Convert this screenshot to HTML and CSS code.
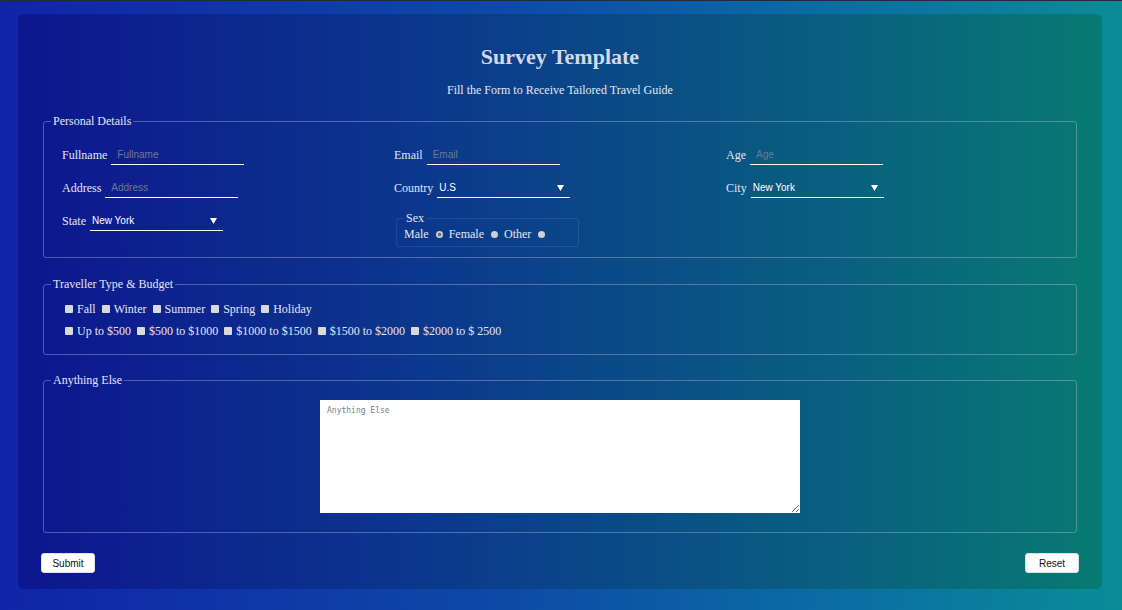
FILE: index.html
```html
<!DOCTYPE html>
<html lang="en">
<head>
<meta charset="utf-8">
<title>Survey Template</title>
<link rel="stylesheet" href="styles.css">
</head>
<body>
<div class="card">
  <h1 class="title">Survey Template</h1>
  <p class="subtitle">Fill the Form to Receive Tailored Travel Guide</p>
  <form class="form">
    <fieldset class="group personal">
      <legend>Personal Details</legend>
      <div class="grid">
        <div class="field"><label>Fullname</label><input class="text" placeholder="Fullname"></div>
        <div class="field"><label>Email</label><input class="text" placeholder="Email"></div>
        <div class="field"><label>Age</label><input class="text" placeholder="Age"></div>
        <div class="field"><label>Address</label><input class="text" placeholder="Address"></div>
        <div class="field"><label>Country</label>
          <span class="select"><select><option>U.S</option></select><svg class="arrow" width="7" height="6" viewBox="0 0 7 6"><path d="M0 0H7L3.5 6Z" fill="#fff"/></svg></span>
        </div>
        <div class="field"><label>City</label>
          <span class="select"><select><option>New York</option></select><svg class="arrow" width="7" height="6" viewBox="0 0 7 6"><path d="M0 0H7L3.5 6Z" fill="#fff"/></svg></span>
        </div>
        <div class="field"><label>State</label>
          <span class="select"><select><option>New York</option></select><svg class="arrow" width="7" height="6" viewBox="0 0 7 6"><path d="M0 0H7L3.5 6Z" fill="#fff"/></svg></span>
        </div>
        <fieldset class="sex">
          <legend>Sex</legend>
          <div class="radios">
            <label>Male</label><input type="radio" name="sex" checked>
            <label>Female</label><input type="radio" name="sex">
            <label>Other</label><input type="radio" name="sex">
          </div>
        </fieldset>
      </div>
    </fieldset>

    <fieldset class="group traveller">
      <legend>Traveller Type &amp; Budget</legend>
      <div class="checks">
        <input type="checkbox"><label>Fall</label>
        <input type="checkbox"><label>Winter</label>
        <input type="checkbox"><label>Summer</label>
        <input type="checkbox"><label>Spring</label>
        <input type="checkbox"><label>Holiday</label>
      </div>
      <div class="checks">
        <input type="checkbox"><label>Up to $500</label>
        <input type="checkbox"><label>$500 to $1000</label>
        <input type="checkbox"><label>$1000 to $1500</label>
        <input type="checkbox"><label>$1500 to $2000</label>
        <input type="checkbox"><label>$2000 to $ 2500</label>
      </div>
    </fieldset>

    <fieldset class="group else">
      <legend>Anything Else</legend>
      <textarea class="notes" placeholder="Anything Else"></textarea>
    </fieldset>

    <div class="actions">
      <button type="submit" class="btn">Submit</button>
      <button type="reset" class="btn">Reset</button>
    </div>
  </form>
</div>
</body>
</html>
```
FILE: styles.css
```css
html, body {
  margin: 0;
  height: 610px;
  overflow: hidden;
}
body {
  box-sizing: border-box;
  border-top: 1px solid #262a36;
  padding: 13px 20px 0 18px;
  background: linear-gradient(to right, #1024a8 0%, #0d4aa6 45%, #0b6ea4 75%, #0a8c97 100%);
  font-family: "Liberation Serif", "Times New Roman", serif;
  color: #e4e5f0;
}
.card {
  border-radius: 6px;
  padding: 30px 23px 16px;
  background: linear-gradient(to right, #0d168f 0%, #0b3a8c 40%, #095f80 75%, #087a72 100%);
}
.title {
  margin: 0;
  font-size: 22px;
  line-height: 26px;
  font-weight: bold;
  text-align: center;
  color: #d6d8e6;
}
.subtitle {
  margin: 13px 0 0;
  font-size: 12px;
  line-height: 14px;
  text-align: center;
  color: #e6e8f2;
}
.form {
  margin: 0;
}
.group {
  margin: 17px 2px 0;
  padding: 17px 7px 10px;
  border: 1px solid rgba(190, 196, 230, 0.38);
  border-radius: 3px;
  min-width: 0;
}
.group legend, .sex legend {
  font-size: 12px;
  line-height: 14px;
  padding: 0 2px;
  color: #e4e5f0;
}
.grid {
  display: grid;
  grid-template-columns: 332px 332px 332px;
  row-gap: 13px;
  padding-left: 11px;
  align-items: start;
}
.field {
  display: flex;
  align-items: center;
  height: 20px;
}
.field label {
  font-size: 12px;
  line-height: 20px;
  margin-right: 4px;
  white-space: nowrap;
}
.text {
  box-sizing: border-box;
  width: 133px;
  height: 20px;
  padding: 0 6px 1px 6px;
  border: 0;
  border-bottom: 1px solid #fff;
  background: transparent;
  color: #fff;
  font: 10px "Liberation Sans", Arial, sans-serif;
  outline: none;
}
.text::placeholder {
  color: #6f7a8c;
}
.select {
  box-sizing: border-box;
  display: inline-flex;
  align-items: center;
  width: 133px;
  height: 20px;
  border-bottom: 1px solid #fff;
}
.select select {
  appearance: none;
  -webkit-appearance: none;
  flex: 1;
  min-width: 0;
  border: 0;
  background: transparent;
  color: #fff;
  font: 10px "Liberation Sans", Arial, sans-serif;
  padding: 0 0 0 2px;
  outline: none;
}
.select option {
  color: #000;
}
.arrow {
  flex: none;
  margin-right: 6px;
}
.sex {
  box-sizing: border-box;
  width: 183px;
  margin: 0 0 0 2px;
  padding: 0 7px 3px;
  border: 1px solid rgba(150, 170, 230, 0.16);
  border-radius: 3px;
}
.radios {
  display: flex;
  align-items: center;
  height: 18px;
  font-size: 12px;
}
.radios label {
  margin-right: 7px;
}
.radios input {
  appearance: none;
  -webkit-appearance: none;
  width: 7px;
  height: 7px;
  margin: 0 6px 0 0;
  border-radius: 50%;
  background: #cfd0d4;
}
.radios input:checked {
  background: radial-gradient(circle, #6e7077 0 1.6px, #cfd0d4 2.2px);
}
.traveller {
  margin-top: 19px;
  padding: 10px 7px 15px;
}
.checks {
  display: flex;
  align-items: center;
  height: 16px;
  font-size: 12px;
  margin-left: 14px;
}
.checks + .checks {
  margin-top: 6px;
}
.checks input {
  appearance: none;
  -webkit-appearance: none;
  width: 8px;
  height: 8px;
  margin: 0 4px 0 0;
  border-radius: 1px;
  background: #d9d9dc;
}
.checks label {
  margin-right: 6px;
  white-space: nowrap;
}
.else {
  margin-top: 18px;
  padding: 13px 7px 19px;
  display: flex;
  justify-content: center;
}
.notes {
  box-sizing: border-box;
  display: block;
  width: 480px;
  height: 113px;
  margin: 0 auto;
  border: 0;
  padding: 6px 7px;
  background: #fff;
  font: 8px "DejaVu Sans Mono", monospace;
  color: #333;
  outline: none;
}
.notes::placeholder {
  color: #76818f;
}
.actions {
  display: flex;
  justify-content: space-between;
  margin-top: 20px;
}
.btn {
  box-sizing: border-box;
  width: 54px;
  height: 20px;
  padding: 0;
  border: 1px solid #e0e0e0;
  border-radius: 3px;
  background: #fff;
  color: #111;
  font: 10px "Liberation Sans", Arial, sans-serif;
}
```
